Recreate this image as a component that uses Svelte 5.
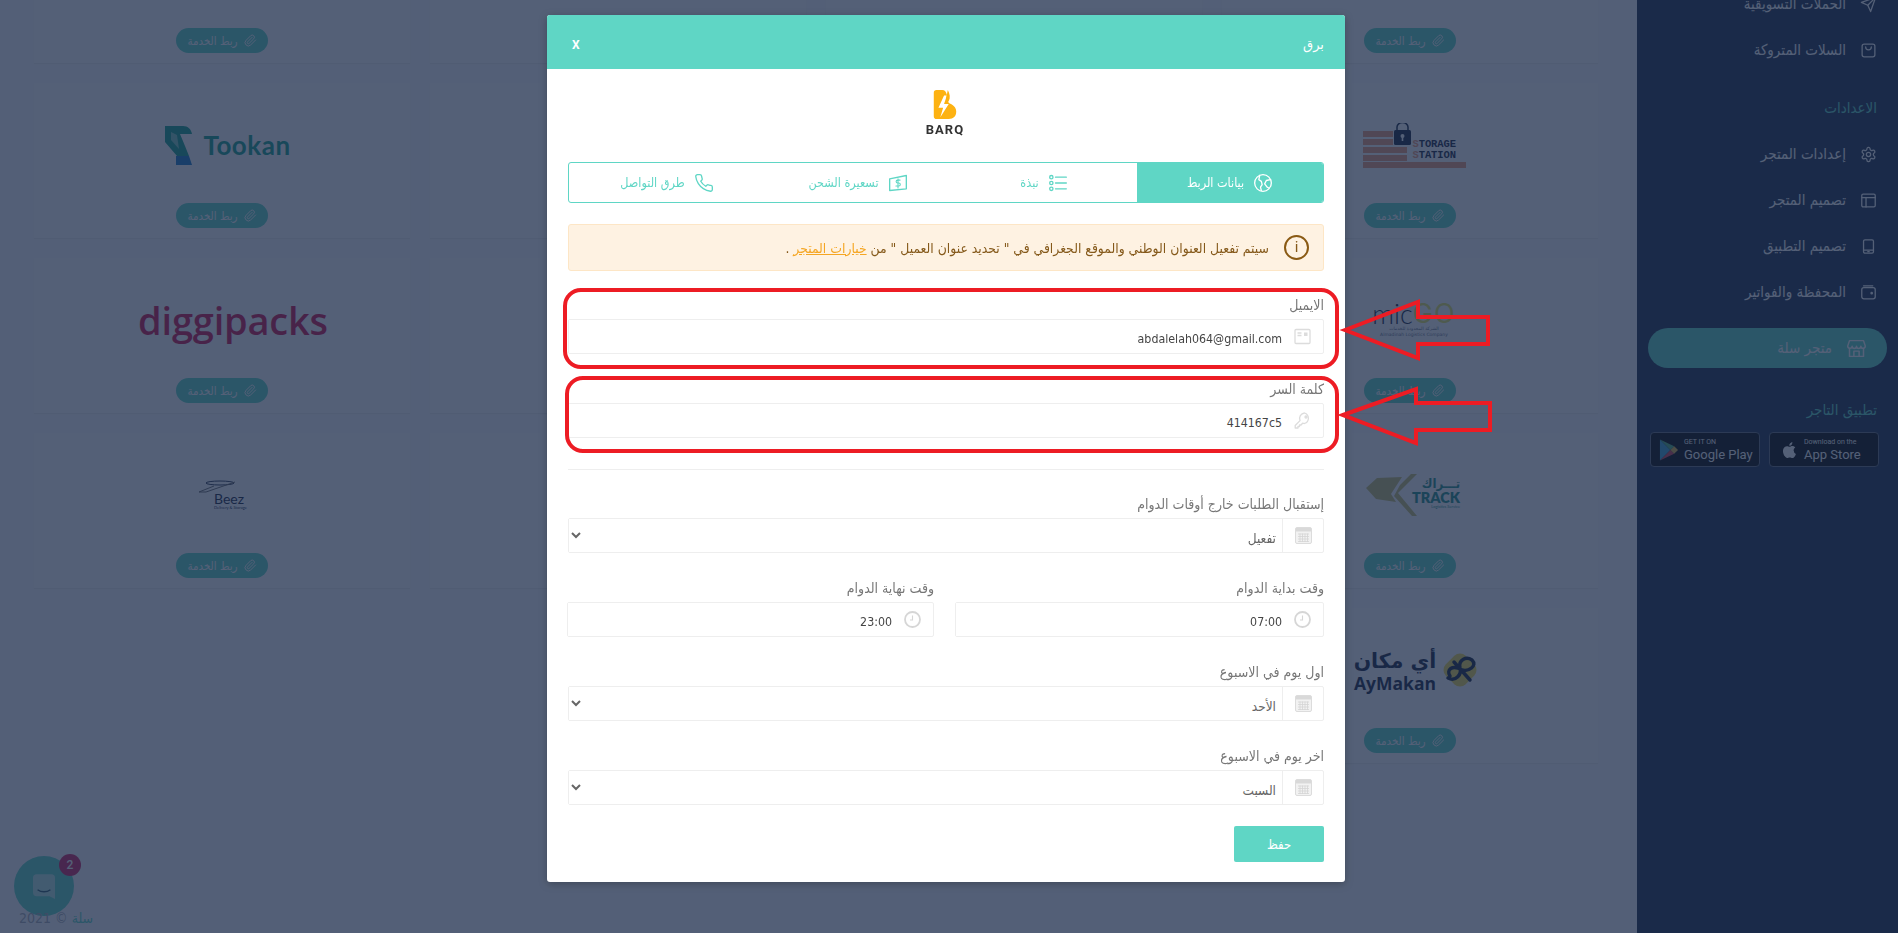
<script>
  const logos = [
    '', '', '', '',
    'storage', '', '', 'tookan',
    'micgo', '', '', 'diggi',
    'track', '', '', 'beez',
    'aymakan'
  ];

  const navTop = [
    { label: 'الحملات التسويقية', icon: 'send' },
    { label: 'السلات المتروكة', icon: 'bag' }
  ];
  const navSettings = [
    { label: 'إعدادات المتجر', icon: 'gear' },
    { label: 'تصميم المتجر', icon: 'layout' },
    { label: 'تصميم التطبيق', icon: 'tablet' },
    { label: 'المحفظة والفواتير', icon: 'wallet' }
  ];
  const tabs = [
    { label: 'بيانات الربط', icon: 'globe', active: true },
    { label: 'نبذة', icon: 'list' },
    { label: 'تسعيرة الشحن', icon: 'money' },
    { label: 'طرق التواصل', icon: 'phone' }
  ];
</script>

{#snippet navIcon(name)}
  <svg class="nav-icon" viewBox="0 0 24 24" fill="none" stroke="currentColor" stroke-width="1.8" stroke-linecap="round" stroke-linejoin="round">
    {#if name === 'send'}
      <path d="M22 2 11 13" /><path d="m22 2-7 20-4-9-9-4z" />
    {:else if name === 'bag'}
      <rect x="3" y="3" width="18" height="18" rx="3" /><path d="M8 7a4 4 0 0 0 8 0" />
    {:else if name === 'gear'}
      <path d="M12.22 2h-.44a2 2 0 0 0-2 2v.18a2 2 0 0 1-1 1.73l-.43.25a2 2 0 0 1-2 0l-.15-.08a2 2 0 0 0-2.73.73l-.22.38a2 2 0 0 0 .73 2.73l.15.1a2 2 0 0 1 1 1.72v.51a2 2 0 0 1-1 1.74l-.15.09a2 2 0 0 0-.73 2.73l.22.38a2 2 0 0 0 2.73.73l.15-.08a2 2 0 0 1 2 0l.43.25a2 2 0 0 1 1 1.73V20a2 2 0 0 0 2 2h.44a2 2 0 0 0 2-2v-.18a2 2 0 0 1 1-1.73l.43-.25a2 2 0 0 1 2 0l.15.08a2 2 0 0 0 2.73-.73l.22-.39a2 2 0 0 0-.73-2.73l-.15-.08a2 2 0 0 1-1-1.74v-.5a2 2 0 0 1 1-1.74l.15-.09a2 2 0 0 0 .73-2.73l-.22-.38a2 2 0 0 0-2.73-.73l-.15.08a2 2 0 0 1-2 0l-.43-.25a2 2 0 0 1-1-1.73V4a2 2 0 0 0-2-2z" />
      <circle cx="12" cy="12" r="3" />
    {:else if name === 'layout'}
      <rect x="2.5" y="3" width="19" height="18" rx="2" /><path d="M2.5 8h19M8.5 8v13" />
    {:else if name === 'tablet'}
      <rect x="5" y="2.5" width="14" height="19" rx="2" /><path d="M5 17h14M11 19.3h2" />
    {:else if name === 'wallet'}
      <rect x="2.5" y="5" width="19" height="16" rx="3" /><path d="M5 2.5h13" /><circle cx="16.5" cy="13" r="1" />
    {/if}
  </svg>
{/snippet}

{#snippet clip()}
  <svg class="clip" viewBox="0 0 24 24" fill="none" stroke="currentColor" stroke-width="1.8" stroke-linecap="round" stroke-linejoin="round">
    <path d="m21.44 11.05-9.19 9.19a6 6 0 0 1-8.49-8.49l8.57-8.57A4 4 0 1 1 18 8.84l-8.59 8.57a2 2 0 0 1-2.83-2.83l8.49-8.48" />
  </svg>
{/snippet}

{#snippet calendar()}
  <svg class="field-icon" viewBox="0 0 17 17" fill="none">
    <rect x="0.5" y="0.5" width="16" height="16" rx="1.5" fill="#f2f2f2" stroke="#dcdcdc" />
    <rect x="1" y="1" width="15" height="3.5" fill="#d9d9d9" />
    <path d="M3 7h11M3 9.5h11M3 12h11M3 14.5h11M5 6.5v8.5M7.5 6.5v8.5M10 6.5v8.5M12.5 6.5v8.5" stroke="#d4d4d4" stroke-width="0.8" />
  </svg>
{/snippet}

{#snippet clock()}
  <svg class="field-icon" viewBox="0 0 17 17" fill="none" stroke="#d6d6d6">
    <circle cx="8.5" cy="8.5" r="7.5" stroke-width="1.8" />
    <path d="M8.5 4.5v4.5H6" stroke-width="1.1" />
  </svg>
{/snippet}

<div class="page">
  <aside class="sidebar">
    <ul class="nav">
      {#each navTop as item}
        <li>{@render navIcon(item.icon)}<span>{item.label}</span></li>
      {/each}
    </ul>
    <h4 class="nav-title">الاعدادات</h4>
    <ul class="nav">
      {#each navSettings as item}
        <li>{@render navIcon(item.icon)}<span>{item.label}</span></li>
      {/each}
    </ul>
    <div class="store-btn">
      <svg viewBox="0 0 24 24" fill="none" stroke="currentColor" stroke-width="1.7" stroke-linejoin="round">
        <path d="M4 3h16l2 6a2.5 2.5 0 0 1-5 .5 2.5 2.5 0 0 1-5 0 2.5 2.5 0 0 1-5 0A2.5 2.5 0 0 1 2 9z" />
        <path d="M4 12v9h16v-9M9 21v-6h6v6" />
      </svg>
      <span>متجر سلة</span>
    </div>
    <h4 class="nav-title app-title">تطبيق التاجر</h4>
    <div class="badges">
      <div class="badge">
        <svg class="apple" viewBox="0 0 24 24" fill="currentColor">
          <path d="M18.7 12.6c0-2.3 1.9-3.4 2-3.5-1.1-1.6-2.8-1.8-3.4-1.8-1.4-.1-2.8.9-3.5.9-.7 0-1.9-.8-3.1-.8-1.6 0-3.1.9-3.9 2.4-1.7 2.9-.4 7.2 1.2 9.5.8 1.1 1.8 2.4 3 2.4 1.2 0 1.7-.8 3.1-.8s1.9.8 3.2.8c1.3 0 2.1-1.2 2.9-2.3.9-1.3 1.3-2.6 1.3-2.7-.1 0-2.4-.9-2.5-3.6zM16.3 5.6c.6-.8 1.1-1.9 1-3-.9 0-2.1.6-2.7 1.4-.6.7-1.1 1.8-1 2.9 1 .1 2.1-.5 2.7-1.3z" />
        </svg>
        <div class="badge-text"><small>Download on the</small><b>App Store</b></div>
      </div>
      <div class="badge">
        <svg class="play" viewBox="0 0 20 24">
          <path d="M1 1v22l11-11z" fill="#3fb6e8" />
          <path d="M1 1l11 11 4-4z" fill="#4fc58a" />
          <path d="M1 23l11-11 4 4z" fill="#e6455a" />
          <path d="M12 12l4-4 4 4-4 4z" fill="#f7c948" />
        </svg>
        <div class="badge-text"><small>GET IT ON</small><b>Google Play</b></div>
      </div>
    </div>
  </aside>

  <main class="content">
    <div class="grid">
      {#each logos as logo}
        <div class="card">
          <div class="logo">
            {#if logo === 'tookan'}
              <div class="tookan">
                <svg viewBox="0 0 27 39" width="27" height="39">
                  <path d="M0 0h18c5 0 8 3 9 8H15l5 12 4 10H12L0 16z" fill="#12a08a" />
                  <path d="M6 6l6 3 2 14-8-9z" fill="#fff" opacity=".45" />
                  <path d="M11 30h13l3 9H11z" fill="#1478c8" />
                </svg>
                <span>Tookan</span>
              </div>
            {:else if logo === 'diggi'}
              <span class="diggi">diggipacks</span>
            {:else if logo === 'beez'}
              <div class="beez">
                <svg viewBox="0 0 38 13" width="38" height="13" fill="none" stroke="#2a3550">
                  <ellipse cx="22" cy="3" rx="14" ry="2" />
                  <path d="M37 2 8 12H1L16 6" stroke="#6b6b6b" />
                </svg>
                <b>Beez</b>
                <small>Delivery &amp; Storage</small>
              </div>
            {:else if logo === 'storage'}
              <div class="storage">
                <svg viewBox="0 0 48 45" width="48" height="45">
                  <path d="M0 8h30v6H0zM0 16h30v6H0zM0 24h44v6H0zM0 32h44v6H0z" fill="#f09a7a" />
                  <rect x="31" y="7" width="17" height="15" rx="1.5" fill="#14233f" />
                  <path d="M34 7V4a5 4 0 0 1 11 0v3" fill="none" stroke="#14233f" stroke-width="1.5" />
                  <circle cx="39.5" cy="13" r="2" fill="#fff" />
                  <rect x="38.7" y="13" width="1.6" height="5" fill="#fff" />
                </svg>
                <div class="storage-text"><span><i>S</i>TORAGE</span><span><i>S</i>TATION</span></div>
                <div class="storage-base"></div>
              </div>
            {:else if logo === 'micgo'}
              <div class="micgo">
                <div class="micgo-name"><span>mic</span><em>GO</em></div>
                <small>الشركة المحدودة للخدمات</small>
                <small>Almadinah Logistics Company</small>
              </div>
            {:else if logo === 'track'}
              <div class="track">
                <svg viewBox="0 0 51 42" width="51" height="42">
                  <path d="M0 14 11 4l25-1-11 17 5 8-20-3z" fill="#c8c070" />
                  <path d="M34 11 45 0l6 0-19 19 19 23-5 0-18-20z" fill="#c8c070" />
                </svg>
                <div class="track-text">
                  <span>تـــراك</span>
                  <b>TRACK</b>
                  <small>Logistics Service</small>
                </div>
              </div>
            {:else if logo === 'aymakan'}
              <div class="aymakan">
                <div class="ay-text"><span>أي مكان</span><b>AyMakan</b></div>
                <svg viewBox="0 0 40 40" width="40" height="40">
                  <rect x="6" y="6" width="28" height="28" rx="8" transform="rotate(45 20 20)" fill="#f2dc50" />
                  <path d="M8 28C16 32 22 24 20 18 18 10 26 6 32 10 38 16 28 22 22 20 12 14 6 20 10 26M30 30 14 12" fill="none" stroke="#14233f" stroke-width="3.5" stroke-linecap="round" />
                </svg>
              </div>
            {/if}
          </div>
          <div class="pill">{@render clip()}<span>ربط الخدمة</span></div>
        </div>
      {/each}
    </div>
    <div class="chat">
      <svg viewBox="0 0 24 27" width="22" height="25">
        <path d="M4 0h16a4 4 0 0 1 4 4v23l-6-3H4a4 4 0 0 1-4-4V4a4 4 0 0 1 4-4z" fill="#fff" opacity=".55" />
        <path d="M5 17c4 3 10 3 14 0" fill="none" stroke="#2b5a6d" stroke-width="1.5" />
      </svg>
      <span class="chat-count">2</span>
    </div>
    <footer class="copy"><span>سلة</span> © 2021</footer>
  </main>
</div>

<div class="backdrop">
  <section class="modal">
    <header class="modal-head">
      <h5>برق</h5>
      <span class="close">x</span>
    </header>
    <div class="modal-body">
      <div class="barq">
        <svg viewBox="0 0 24 31" width="24" height="31">
          <path d="M0 3a3 3 0 0 1 3-3h6c3 0 4 2 5 5l2 9c5 2 8 5 8 9 0 5-3 8-8 8H3a3 3 0 0 1-3-3z" fill="#fdb212" />
          <path d="M11 6 5 19h5l-3 10 9-14h-5l3-9z" fill="#fff" />
          <path d="M15 0c2 4 3 8 1 12l-3-2z" fill="#fdb212" />
        </svg>
        <b>BARQ</b>
      </div>

      <nav class="tabs">
        {#each tabs as tab}
          <div class="tab" class:active={tab.active}>
            <svg viewBox="0 0 24 24" fill="none" stroke="currentColor" stroke-width="1.6" stroke-linecap="round" stroke-linejoin="round">
              {#if tab.icon === 'globe'}
                <circle cx="12" cy="12" r="10" /><path d="M8 3l-1 5 3 2 1 4-2 3 1 4M21 8l-5 1-2 4 3 4 2 1" />
              {:else if tab.icon === 'list'}
                <circle cx="4" cy="5" r="2" /><circle cx="4" cy="12" r="2" /><circle cx="4" cy="19" r="2" /><path d="M9 5h13M9 12h13M9 19h13" />
              {:else if tab.icon === 'money'}
                <path d="M2 7l20-4v16L2 21z" /><path d="M14.5 8.5h-3a1.5 1.5 0 0 0 0 3.500h1.500a1.500 1.500 0 0 1 0 3.500h-3.500M12 7v11" stroke-width="1.3" />
              {:else}
                <path d="M22 16.9v3a2 2 0 0 1-2.2 2 19.800 19.800 0 0 1-8.600-3.100 19.500 19.500 0 0 1-6-6A19.800 19.800 0 0 1 2.100 4.200 2 2 0 0 1 4.100 2h3a2 2 0 0 1 2 1.700c.1 1 .4 1.900.7 2.800a2 2 0 0 1-.5 2.100L8.100 9.900a16 16 0 0 0 6 6l1.300-1.300a2 2 0 0 1 2.100-.4c.9.3 1.800.6 2.800.7a2 2 0 0 1 1.700 2z" />
              {/if}
            </svg>
            <span>{tab.label}</span>
          </div>
        {/each}
      </nav>

      <div class="alert">
        <span class="alert-icon">i</span>
        <p>سيتم تفعيل العنوان الوطني والموقع الجغرافي في " تحديد عنوان العميل " من <a href="#top">خيارات المتجر</a> .</p>
      </div>

      <div class="field">
        <label for="email">الايميل</label>
        <div class="control">
          <span class="addon">
            <svg class="field-icon" viewBox="0 0 17 17" fill="none" stroke="#dcdcdc" stroke-width="1.3">
              <rect x="1" y="1.500" width="15" height="14" rx="1" />
              <path d="M3.500 5h4M3.500 7.500h4" />
              <rect x="10" y="4.500" width="3.500" height="3.500" fill="#dcdcdc" stroke="none" />
            </svg>
          </span>
          <input id="email" value="abdalelah064@gmail.com" readonly />
        </div>
      </div>

      <div class="field">
        <label for="password">كلمة السر</label>
        <div class="control">
          <span class="addon">
            <svg class="field-icon" viewBox="0 0 17 17" fill="none" stroke="#dcdcdc" stroke-width="1.3" stroke-linejoin="round">
              <path d="M10.500 1a5.500 5.500 0 0 1 0 10.500c-.7 0-1.300-.1-1.900-.3L7 13H5.500v1.500H4V16H1.200v-2.500L6 8.600A5.500 5.500 0 0 1 10.500 1z" />
              <circle cx="12" cy="5" r="1" />
            </svg>
          </span>
          <input id="password" value="414167c5" readonly />
        </div>
      </div>

      <hr />

      <div class="field">
        <label for="after-hours">إستقبال الطلبات خارج أوقات الدوام</label>
        <div class="control">
          <span class="addon boxed">{@render calendar()}</span>
          <select id="after-hours"><option>تفعيل</option></select>
        </div>
      </div>

      <div class="row">
        <div class="field">
          <label for="start">وقت بداية الدوام</label>
          <div class="control">
            <span class="addon">{@render clock()}</span>
            <input id="start" value="07:00" readonly />
          </div>
        </div>
        <div class="field">
          <label for="end">وقت نهاية الدوام</label>
          <div class="control">
            <span class="addon">{@render clock()}</span>
            <input id="end" value="23:00" readonly />
          </div>
        </div>
      </div>

      <div class="field">
        <label for="first-day">اول يوم في الاسبوع</label>
        <div class="control">
          <span class="addon boxed">{@render calendar()}</span>
          <select id="first-day"><option>الأحد</option></select>
        </div>
      </div>

      <div class="field">
        <label for="last-day">اخر يوم في الاسبوع</label>
        <div class="control">
          <span class="addon boxed">{@render calendar()}</span>
          <select id="last-day"><option>السبت</option></select>
        </div>
      </div>

      <div class="actions"><button type="button">حفظ</button></div>
    </div>
  </section>
</div>

<!-- red markup drawn on top of the screenshot -->
<svg class="markup" viewBox="0 0 1898 933" fill="none" stroke="#ed1c24" stroke-width="4">
  <rect x="565" y="290" width="772" height="77" rx="16" />
  <rect x="567" y="378" width="770" height="73" rx="16" />
  <path d="M1345 330 1418 302V317H1488V344H1418V358Z" />
  <path d="M1343 415 1416 389V403H1490V430H1416V443Z" />
</svg>

<style>
  :global(body) {
    margin: 0;
    overflow: hidden;
    background: #fcfcfd;
  }

  * {
    box-sizing: border-box;
  }

  .page {
    display: flex;
    direction: rtl;
    height: 933px;
    overflow: hidden;
    font-family: "DejaVu Sans", sans-serif;
  }

  .sidebar {
    flex: 0 0 261px;
    background: #1b2b49;
    color: #fff;
    padding: 0 21px 0 11px;
  }

  .nav {
    list-style: none;
    margin: 0;
    padding: 0;
  }

  .sidebar > .nav:first-child {
    margin-top: -19px;
  }

  .nav li {
    display: flex;
    align-items: center;
    gap: 14px;
    height: 46px;
    font-size: 15px;
    font-stretch: condensed;
  }

  .nav-icon {
    width: 17px;
    height: 17px;
    flex: none;
  }

  .nav-title {
    margin: 25px 0 13px;
    font-size: 15px;
    font-weight: 400;
    font-stretch: condensed;
    color: #5dd5c4;
    line-height: 20px;
  }

  .store-btn {
    display: flex;
    align-items: center;
    gap: 14px;
    height: 40px;
    margin: 13px -10px 0 0;
    padding-right: 20px;
    border-radius: 20px;
    background: #5dd5c4;
    font-size: 15px;
    font-stretch: condensed;
  }

  .store-btn svg {
    width: 21px;
    height: 21px;
  }

  .app-title {
    margin: 32px 0 12px;
  }

  .badges {
    display: flex;
    gap: 9px;
    margin-right: -2px;
    direction: rtl;
  }

  .badge {
    display: flex;
    direction: ltr;
    align-items: center;
    gap: 6px;
    width: 110px;
    height: 35px;
    padding-left: 8px;
    border: 1px solid #606878;
    border-radius: 4px;
    background: #000;
    color: #fff;
  }

  .apple {
    width: 20px;
    height: 24px;
    flex: none;
  }

  .play {
    width: 19px;
    height: 24px;
    flex: none;
    opacity: .9;
  }

  .badge-text {
    display: flex;
    flex-direction: column;
    font-family: Roboto, sans-serif;
    line-height: 1;
  }

  .badge-text small {
    font-size: 7px;
    margin-bottom: 2px;
  }

  .badge-text b {
    font-size: 13px;
    font-weight: 400;
    white-space: nowrap;
  }

  .content {
    flex: 1;
    padding: 0 39px 0 34px;
    position: relative;
  }

  .grid {
    display: grid;
    grid-template-columns: repeat(4, 376px);
    gap: 20px;
    margin-top: -92px;
  }

  .card {
    display: flex;
    flex-direction: column;
    align-items: center;
    height: 155px;
    padding-bottom: 10px;
    background: #fff;
    box-shadow: 0 1px 1px rgba(0, 0, 0, .06);
  }

  .logo {
    flex: 1;
    display: flex;
    align-items: center;
    justify-content: center;
    direction: ltr;
    padding-top: 4px;
  }

  .pill {
    display: flex;
    align-items: center;
    justify-content: center;
    gap: 6px;
    width: 92px;
    height: 25px;
    border-radius: 13px;
    background: #5dd5c4;
    color: #fff;
    font-size: 11.500px;
    font-stretch: condensed;
  }

  .clip {
    width: 13px;
    height: 13px;
    flex: none;
  }

  .tookan {
    display: flex;
    align-items: center;
    gap: 11px;
    margin-left: 12px;
  }

  .tookan span {
    font: 700 26px Lato, sans-serif;
    letter-spacing: .5px;
    color: #12a08a;
  }

  .diggi {
    font: 600 38px/1 "Open Sans", sans-serif;
    color: #d00f4a;
    margin-left: 22px;
    letter-spacing: -.2px;
  }

  .beez {
    display: flex;
    flex-direction: column;
    margin-left: 4px;
    width: 52px;
  }

  .beez b {
    font: 400 14px/12px Lato, sans-serif;
    color: #14233f;
    margin-left: 16px;
  }

  .beez small {
    font: 400 4px/5px Lato, sans-serif;
    color: #14233f;
    margin-left: 16px;
    white-space: nowrap;
  }

  .storage {
    position: relative;
    width: 103px;
    height: 45px;
    margin-left: 8px;
  }

  .storage-text {
    position: absolute;
    left: 50px;
    top: 16px;
    display: flex;
    flex-direction: column;
    font: 700 10.500px/11px "Liberation Mono", monospace;
    color: #14233f;
    letter-spacing: -.1px;
  }

  .storage-text i {
    font-style: normal;
    color: #f09a7a;
  }

  .storage-base {
    position: absolute;
    left: 0;
    right: 0;
    bottom: 0;
    height: 6px;
    background: #f09a7a;
  }

  .micgo {
    display: flex;
    flex-direction: column;
    align-items: center;
    margin-left: 8px;
  }

  .micgo-name {
    display: flex;
    font: 300 27px/24px Lato, sans-serif;
    color: #14233f;
  }

  .micgo-name em {
    font-style: normal;
    font-weight: 400;
    color: #e8e860;
    font-family: Inter, sans-serif;
    letter-spacing: 1px;
  }

  .micgo small {
    font: 400 4.500px/6px "DejaVu Sans", sans-serif;
    color: #6a7488;
  }

  .track {
    display: flex;
    align-items: flex-start;
    gap: 0;
    margin-left: 6px;
  }

  .track-text {
    display: flex;
    flex-direction: column;
    align-items: flex-end;
    margin-left: -5px;
    color: #1f8e86;
    padding-top: 3px;
  }

  .track-text span {
    font: 700 13px/14px "DejaVu Sans", sans-serif;
    font-stretch: condensed;
  }

  .track-text b {
    font: 800 14.500px/13px Lato, sans-serif;
  }

  .track-text small {
    font: 400 4px/6px Lato, sans-serif;
  }

  .aymakan {
    display: flex;
    align-items: center;
    gap: 4px;
    margin-left: 14px;
  }

  .ay-text {
    display: flex;
    flex-direction: column;
    align-items: center;
    color: #14233f;
  }

  .ay-text span {
    font: 700 20.500px/25px "DejaVu Sans", sans-serif;
  }

  .ay-text b {
    font: 700 17.500px/18px "Open Sans", sans-serif;
  }

  .chat {
    position: absolute;
    left: 14px;
    bottom: 17px;
    display: flex;
    align-items: center;
    justify-content: center;
    width: 60px;
    height: 60px;
    border-radius: 50%;
    background: #5dd5c4;
  }

  .chat-count {
    position: absolute;
    top: -2px;
    right: -7px;
    width: 22px;
    height: 22px;
    border-radius: 50%;
    background: #cf1f5f;
    color: #fff;
    font: 500 12px/22px Roboto, sans-serif;
    text-align: center;
  }

  .copy {
    position: absolute;
    left: 19px;
    bottom: 6px;
    font: 500 14px/18px "DejaVu Sans", sans-serif;
    font-stretch: condensed;
    color: #a8adb8;
  }

  .copy span {
    color: #5dd5c4;
  }

  .backdrop {
    position: fixed;
    inset: 0;
    display: flex;
    justify-content: center;
    align-items: flex-start;
    padding: 15px 6px 0 0;
    background: rgba(27, 43, 73, .75);
    direction: rtl;
    font-family: "DejaVu Sans", sans-serif;
  }

  .modal {
    width: 798px;
    background: #fff;
    border-radius: 3px;
    overflow: hidden;
    box-shadow: 0 2px 8px rgba(0, 0, 0, .25);
  }

  .modal-head {
    display: flex;
    align-items: center;
    justify-content: space-between;
    height: 54px;
    padding: 5px 21px 0 25px;
    background: #5fd6c5;
    color: #fff;
  }

  .modal-head h5 {
    margin: 0;
    font-size: 13px;
    font-weight: 400;
  }

  .close {
    font: 700 12px/1 Roboto, sans-serif;
    text-transform: uppercase;
  }

  .modal-body {
    padding: 21px 21px 20px;
  }

  .barq {
    display: flex;
    flex-direction: column;
    align-items: center;
    height: 47px;
    margin: 0 2px 25px 0;
    direction: ltr;
  }

  .barq b {
    margin-top: 4px;
    font: 700 13px/14px Roboto, sans-serif;
    letter-spacing: 1px;
    color: #333;
  }

  .tabs {
    display: grid;
    grid-template-columns: 186px 186px 186px 1fr;
    height: 41px;
    margin-bottom: 21px;
    border: 1px solid #5fd6c5;
    border-radius: 3px;
    overflow: hidden;
  }

  .tab {
    display: flex;
    align-items: center;
    justify-content: center;
    gap: 9px;
    font-size: 12.500px;
    font-stretch: condensed;
    color: #5fd6c5;
  }

  .tab.active {
    background: #5fd6c5;
    color: #fff;
    margin: -1px 0;
  }

  .tab svg {
    width: 20px;
    height: 20px;
    flex: none;
  }

  .alert {
    display: flex;
    align-items: center;
    gap: 15px;
    height: 47px;
    margin-bottom: 24px;
    padding: 0 14px;
    background: #fef2e2;
    border: 1px solid #fde6c6;
    border-radius: 3px;
    color: #85591a;
    font-size: 13.800px;
    font-stretch: condensed;
  }

  .alert p {
    margin: 0;
  }

  .alert a {
    color: #f5a623;
  }

  .alert-icon {
    flex: none;
    width: 25px;
    height: 25px;
    border: 2px solid #8a5a14;
    border-radius: 50%;
    text-align: center;
    font: 400 15px/21px Roboto, sans-serif;
  }

  .field {
    margin-bottom: 25px;
  }

  .field label {
    display: block;
    height: 24px;
    font-size: 14px;
    font-stretch: condensed;
    line-height: 20px;
    color: #777;
  }

  .control {
    display: flex;
    height: 35px;
    border: 1px solid #eeeeee;
    border-radius: 2px;
    background: #fff;
  }

  .addon {
    flex: 0 0 41px;
    display: flex;
    align-items: center;
    justify-content: center;
  }

  .addon.boxed {
    border-left: 1px solid #eeeeee;
  }

  .field-icon {
    width: 17px;
    height: 17px;
  }

  input,
  select {
    flex: 1;
    min-width: 0;
    height: 100%;
    border: 0;
    outline: 0;
    background: #fff;
    color: #444;
    font: 400 12.300px "DejaVu Sans", sans-serif;
    font-stretch: condensed;
    direction: rtl;
  }

  input {
    padding: 4px 0 0 0;
  }

  select {
    padding: 5px 2px 0 0;
    font-size: 13.500px;
    color: #666;
  }

  hr {
    height: 1px;
    margin: 31px 0 24px;
    border: 0;
    background: #eeeeee;
  }

  .row {
    display: grid;
    grid-template-columns: 369px 367px;
    gap: 21px;
  }

  .actions {
    display: flex;
    margin-top: -4px;
  }

  .actions button {
    width: 90px;
    height: 36px;
    border: 0;
    border-radius: 2px;
    background: #5fd6c5;
    color: #fff;
    font: 400 13px "DejaVu Sans", sans-serif;
    font-stretch: condensed;
  }

  .markup {
    position: fixed;
    inset: 0;
    width: 1898px;
    height: 933px;
    pointer-events: none;
  }
</style>
